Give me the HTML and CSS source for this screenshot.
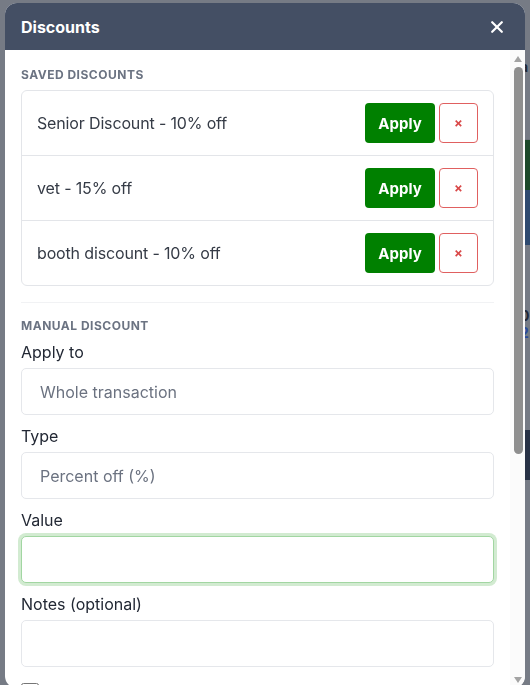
FILE: index.html
```html
<!DOCTYPE html>
<html lang="en">
<head>
    <meta charset="UTF-8">
    <meta name="viewport" content="width=device-width, initial-scale=1.0">
    <title>Discounts</title>
    <link rel="stylesheet" href="styles.css">
</head>
<body>
    <!-- page behind the dialog, only its edges show -->
    <div class="page">
        <div class="page-col">
            <div class="band band-top"><span>a</span></div>
            <div class="band band-green"></div>
            <div class="band band-blue"></div>
            <div class="band band-text"><span>0</span><span class="link">2</span></div>
            <div class="band band-navy"></div>
        </div>
    </div>

    <div class="overlay">
        <div class="modal">
            <div class="modal-header">
                <h2>Discounts</h2>
                <button class="close" aria-label="Close">
                    <svg width="12" height="12" viewBox="0 0 12 12">
                        <path d="M1.2 1.2 L10.8 10.8 M10.8 1.2 L1.2 10.8" stroke="#fff" stroke-width="2.2" stroke-linecap="round"/>
                    </svg>
                </button>
            </div>

            <div class="modal-main">
                <div class="modal-body">
                    <div class="section-title">SAVED DISCOUNTS</div>
                    <div class="saved-list">
                        <div class="saved-row">
                            <div class="saved-name">Senior Discount - 10% off</div>
                            <button class="btn-apply">Apply</button>
                            <button class="btn-remove">&times;</button>
                        </div>
                        <div class="saved-row">
                            <div class="saved-name">vet - 15% off</div>
                            <button class="btn-apply">Apply</button>
                            <button class="btn-remove">&times;</button>
                        </div>
                        <div class="saved-row">
                            <div class="saved-name">booth discount - 10% off</div>
                            <button class="btn-apply">Apply</button>
                            <button class="btn-remove">&times;</button>
                        </div>
                    </div>

                    <div class="manual">
                        <div class="section-title">MANUAL DISCOUNT</div>

                        <div class="field">
                            <label>Apply to</label>
                            <select class="input">
                                <option>Whole transaction</option>
                            </select>
                        </div>
                        <div class="field">
                            <label>Type</label>
                            <select class="input">
                                <option>Percent off (%)</option>
                            </select>
                        </div>
                        <div class="field">
                            <label>Value</label>
                            <input class="input focused" type="text">
                        </div>
                        <div class="field">
                            <label>Notes (optional)</label>
                            <input class="input" type="text">
                        </div>

                        <label class="check-row">
                            <input type="checkbox">
                            <span>Save as preset</span>
                        </label>
                    </div>
                </div>

                <!-- scrollbar of the body, drawn by hand -->
                <div class="scrollbar">
                    <div class="sb-up"></div>
                    <div class="sb-thumb"></div>
                    <div class="sb-down"></div>
                </div>
            </div>
        </div>
    </div>
</body>
</html>
```

FILE: styles.css
```css
body {
    margin: 0;
    font-family: Inter, "Noto Sans", sans-serif;
    background-color: #767b85;
}

.page {
    height: 685px;
    overflow: hidden;
}

.page-col {
    width: 40px;
    margin-left: auto;
}

.band {
    box-sizing: border-box;
    font-size: 14px;
    font-weight: 700;
    color: #222836;
}

.band-top {
    height: 140px;
    padding: 58px 0 0 30px;
    border-bottom: 1px solid #6d727c;
}

.band-green {
    height: 50px;
    background-color: #1d4a2b;
}

.band-blue {
    height: 55px;
    background-color: #2e4a70;
}

.band-text {
    height: 185px;
    display: flex;
    flex-direction: column;
    padding: 62px 0 0 30px;
    line-height: 17px;
}

.band-text .link {
    color: #2b4a9c;
}

.band-navy {
    height: 50px;
    background-color: #283246;
}

.overlay {
    position: fixed;
    inset: 0;
}

.modal {
    display: flex;
    flex-direction: column;
    width: 520px;
    height: 685px;
    margin: 3px 0 0 5px;
    background-color: #fff;
    border-radius: 12px;
    overflow: hidden;
}

.modal-header {
    display: flex;
    align-items: center;
    justify-content: space-between;
    height: 47px;
    flex-shrink: 0;
    padding: 0 22px 0 16px;
    background-color: #444f64;
}

.modal-header h2 {
    margin: 0;
    font-size: 16px;
    font-weight: 700;
    color: #fff;
}

.close {
    display: flex;
    width: 12px;
    height: 12px;
    padding: 0;
    background: none;
    border: none;
}

.modal-main {
    flex: 1;
    display: flex;
    min-height: 0;
}

.modal-body {
    flex: 1;
    overflow: hidden;
    padding: 17px 16px 16px;
}

.scrollbar {
    display: flex;
    flex-direction: column;
    align-items: center;
    width: 15px;
    background-color: #fbfbfb;
}

.sb-up {
    margin-top: 6px;
    border-left: 4.5px solid transparent;
    border-right: 4.5px solid transparent;
    border-bottom: 6px solid #a3a3a3;
}

.sb-thumb {
    width: 9px;
    height: 387px;
    margin: 5px 0 0 2px;
    background-color: #8f8f8f;
    border-radius: 5px;
}

.sb-down {
    margin-top: auto;
    margin-bottom: 5px;
    border-left: 4.5px solid transparent;
    border-right: 4.5px solid transparent;
    border-top: 6px solid #a3a3a3;
}

.section-title {
    font-size: 12px;
    line-height: 16px;
    font-weight: 700;
    letter-spacing: 0.5px;
    color: #6b7382;
    margin-bottom: 7px;
}

.saved-list {
    border: 1px solid #e3e5e9;
    border-radius: 6px;
    margin-bottom: 16px;
}

.saved-row {
    display: flex;
    align-items: center;
    padding: 12px 15px;
    border-top: 1px solid #e3e5e9;
}

.saved-row:first-child {
    border-top: none;
}

.saved-name {
    flex: 1;
    font-size: 16px;
    letter-spacing: -0.15px;
    color: #353b46;
}

button {
    font-family: inherit;
    cursor: pointer;
}

.btn-apply {
    width: 70px;
    height: 40px;
    margin-right: 4px;
    background-color: #008000;
    color: #fff;
    font-size: 15px;
    font-weight: 700;
    border: none;
    border-radius: 4px;
}

.btn-remove {
    width: 39px;
    height: 40px;
    padding: 0;
    background-color: #fff;
    color: #d94848;
    font-size: 13px;
    font-weight: 700;
    border: 1px solid #e06060;
    border-radius: 4px;
}

.manual {
    border-top: 1px solid #f1f2f4;
    padding-top: 15px;
}

.manual .section-title {
    margin-bottom: 6px;
}

.field {
    margin-bottom: 9px;
}

.field label {
    display: block;
    font-size: 16px;
    line-height: 24px;
    color: #222834;
    margin-bottom: 4px;
}

.input {
    display: block;
    width: 100%;
    height: 47px;
    box-sizing: border-box;
    padding: 0 18px;
    font-family: inherit;
    font-size: 16px;
    color: #6b7280;
    background-color: #fff;
    border: 1px solid #e5e7eb;
    border-radius: 5px;
    outline: none;
    appearance: none;
    -webkit-appearance: none;
}

.focused {
    border-color: #a2d6a2;
    box-shadow: 0 0 0 3px #d2ebd1;
}

.check-row {
    display: flex;
    align-items: center;
    gap: 8px;
    margin-top: 15px;
    font-size: 15px;
    color: #222834;
}

.check-row input {
    width: 18px;
    height: 18px;
    margin: 0;
}
```
